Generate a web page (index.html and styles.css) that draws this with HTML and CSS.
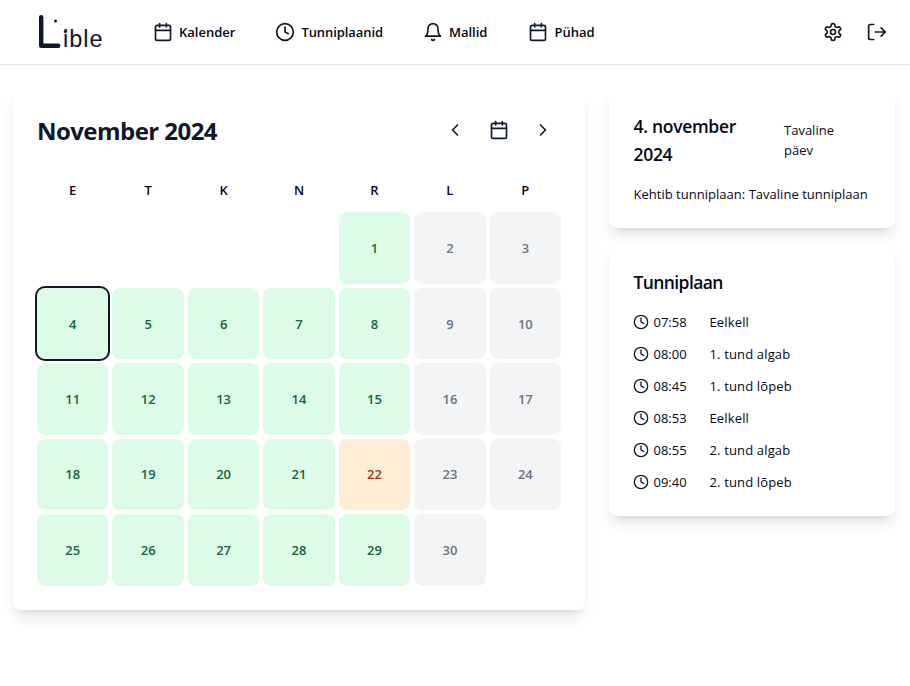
FILE: index.html
```html
<!DOCTYPE html>
<html lang="et">
<head>
<meta charset="utf-8">
<title>Kalender</title>
<link rel="stylesheet" href="styles.css">
</head>
<body>
<svg class="sprite" aria-hidden="true">
  <symbol id="calendar" viewBox="0 0 24 24"><path d="M8 2v4M16 2v4M3 10h18"/><rect width="18" height="18" x="3" y="4" rx="2"/></symbol>
  <symbol id="clock" viewBox="0 0 24 24"><circle cx="12" cy="12" r="10"/><path d="M12 6v6l4 2"/></symbol>
  <symbol id="bell" viewBox="0 0 24 24"><path d="M6 8a6 6 0 0 1 12 0c0 7 3 9 3 9H3s3-2 3-9M10.3 21a1.94 1.94 0 0 0 3.4 0"/></symbol>
  <symbol id="gear" viewBox="0 0 24 24"><path d="M12.22 2h-.44a2 2 0 0 0-2 2v.18a2 2 0 0 1-1 1.73l-.43.25a2 2 0 0 1-2 0l-.15-.08a2 2 0 0 0-2.73.73l-.22.38a2 2 0 0 0 .73 2.73l.15.1a2 2 0 0 1 1 1.72v.51a2 2 0 0 1-1 1.74l-.15.09a2 2 0 0 0-.73 2.73l.22.38a2 2 0 0 0 2.73.73l.15-.08a2 2 0 0 1 2 0l.43.25a2 2 0 0 1 1 1.73V20a2 2 0 0 0 2 2h.44a2 2 0 0 0 2-2v-.18a2 2 0 0 1 1-1.73l.43-.25a2 2 0 0 1 2 0l.15.08a2 2 0 0 0 2.73-.73l.22-.39a2 2 0 0 0-.73-2.73l-.15-.08a2 2 0 0 1-1-1.74v-.5a2 2 0 0 1 1-1.74l.15-.09a2 2 0 0 0 .73-2.73l-.22-.38a2 2 0 0 0-2.73-.73l-.15.08a2 2 0 0 1-2 0l-.43-.25a2 2 0 0 1-1-1.73V4a2 2 0 0 0-2-2z"/><circle cx="12" cy="12" r="3"/></symbol>
  <symbol id="exit" viewBox="0 0 24 24"><path d="M8 3H4a2 2 0 0 0-2 2v14a2 2 0 0 0 2 2h4M17 17l5-5-5-5M22 12H10"/></symbol>
  <symbol id="left" viewBox="0 0 24 24"><path d="m15 18-6-6 6-6"/></symbol>
  <symbol id="right" viewBox="0 0 24 24"><path d="m9 18 6-6-6-6"/></symbol>
</svg>
<header class="topbar">
  <svg class="logo" width="80" height="48" viewBox="0 0 80 48">
    <path class="logo-l" d="M11.2 9.3v28.4h17"/>
    <g class="logo-dots"><circle cx="25.5" cy="13" r="1.5"/><circle cx="35.5" cy="23.5" r="1.6"/></g>
    <g class="logo-faint"><circle cx="16.5" cy="9.7" r=".6"/><circle cx="21.5" cy="11.3" r=".6"/><circle cx="30.5" cy="16.5" r=".6"/><circle cx="34.5" cy="20.5" r=".6"/><circle cx="38.5" cy="29" r=".5"/><circle cx="39.3" cy="34.5" r=".5"/></g>
    <text class="logo-text" x="33" y="39">ible</text>
  </svg>
  <nav class="nav">
    <a class="link"><svg class="icon"><use href="#calendar"/></svg><span>Kalender</span></a>
    <a class="link wide"><svg class="icon"><use href="#clock"/></svg><span>Tunniplaanid</span></a>
    <a class="link"><svg class="icon"><use href="#bell"/></svg><span>Mallid</span></a>
    <a class="link last"><svg class="icon"><use href="#calendar"/></svg><span>Pühad</span></a>
  </nav>
  <div class="actions"><svg class="icon"><use href="#gear"/></svg><svg class="icon"><use href="#exit"/></svg></div>
</header>
<main class="content">
  <section class="card month">
    <div class="month-head">
      <h1>November 2024</h1>
      <div class="controls"><svg class="icon"><use href="#left"/></svg><svg class="icon"><use href="#calendar"/></svg><svg class="icon"><use href="#right"/></svg></div>
    </div>
    <div class="weekdays"><span>E</span><span>T</span><span>K</span><span>N</span><span>R</span><span>L</span><span>P</span></div>
    <div class="days">
      <div class="day first">1</div><div class="day off">2</div><div class="day off">3</div>
      <div class="day selected">4</div><div class="day">5</div><div class="day">6</div><div class="day">7</div><div class="day">8</div><div class="day off">9</div><div class="day off">10</div>
      <div class="day">11</div><div class="day">12</div><div class="day">13</div><div class="day">14</div><div class="day">15</div><div class="day off">16</div><div class="day off">17</div>
      <div class="day">18</div><div class="day">19</div><div class="day">20</div><div class="day">21</div><div class="day special">22</div><div class="day off">23</div><div class="day off">24</div>
      <div class="day">25</div><div class="day">26</div><div class="day">27</div><div class="day">28</div><div class="day">29</div><div class="day off">30</div>
    </div>
  </section>
  <aside class="side">
    <section class="card info">
      <div class="info-head"><h2>4. november 2024</h2><span class="kind">Tavaline päev</span></div>
      <p>Kehtib tunniplaan: Tavaline tunniplaan</p>
    </section>
    <section class="card schedule">
      <h2 class="tight">Tunniplaan</h2>
      <ul>
        <li><svg class="icon"><use href="#clock"/></svg><time>07:58</time><span>Eelkell</span></li>
        <li><svg class="icon"><use href="#clock"/></svg><time>08:00</time><span>1. tund algab</span></li>
        <li><svg class="icon"><use href="#clock"/></svg><time>08:45</time><span>1. tund lõpeb</span></li>
        <li><svg class="icon"><use href="#clock"/></svg><time>08:53</time><span>Eelkell</span></li>
        <li><svg class="icon"><use href="#clock"/></svg><time>08:55</time><span>2. tund algab</span></li>
        <li><svg class="icon"><use href="#clock"/></svg><time>09:40</time><span>2. tund lõpeb</span></li>
      </ul>
    </section>
  </aside>
</main>
</body>
</html>
```
FILE: styles.css
```css
* { box-sizing: border-box; margin: 0; padding: 0; }
body { background: #fff; color: #020817; font: 14px/20px "Open Sans", "Noto Sans", sans-serif; min-height: 686px; overflow: hidden; }
.sprite { display: none; }
.icon { display: block; flex: none; width: 20px; height: 20px; fill: none; stroke: #0f172a; stroke-width: 2; stroke-linecap: round; stroke-linejoin: round; }
.topbar { display: flex; align-items: center; height: 65px; padding: 0 23px 1px 30px; border-bottom: 1px solid #e5e7eb; box-shadow: 0 1px 2px rgba(0, 0, 0, .05); }
.logo { flex: none; }
.logo-l { fill: none; stroke: #0f172a; stroke-width: 4.4; stroke-linecap: round; stroke-linejoin: round; }
.logo-dots { fill: #0f172a; }
.logo-faint { fill: #b8bcc5; }
.logo-text { font: 23.5px "Liberation Sans", sans-serif; letter-spacing: 1px; fill: #0f172a; }
.nav { display: flex; gap: 40px; margin-left: 43px; }
.link { display: flex; align-items: center; gap: 6px; font-size: 13px; font-weight: 600; }
.wide { letter-spacing: -.08px; }
.last { margin-left: 1px; }
.actions { display: flex; gap: 24px; margin-left: auto; }
.content { display: flex; align-items: flex-start; gap: 24px; padding: 23px 15px 0 13px; }
.card { background: #fff; border-radius: 8px; padding: 24px; box-shadow: 0 10px 15px -3px rgba(0, 0, 0, .1), 0 4px 6px -4px rgba(0, 0, 0, .1); }
.month { width: 572px; height: 522px; flex: none; }
.month-head { display: flex; justify-content: space-between; align-items: center; height: 36px; }
h1 { font-size: 24px; line-height: 32px; font-weight: 700; letter-spacing: -.55px; color: #0f172a; padding-top: 2px; }
.controls { display: flex; gap: 24px; padding-right: 8px; }
.weekdays, .days { display: grid; grid-template-columns: repeat(7, 1fr); gap: 4px; text-align: center; }
.weekdays { margin-top: 32px; font-size: 13px; font-weight: 600; }
.days { margin-top: 12.4px; }
.day { display: flex; align-items: center; justify-content: center; aspect-ratio: 1; border-radius: 8px; background: #dcfce7; color: #166534; font-size: 13px; font-weight: 600; }
.first { grid-column-start: 5; }
.off { background: #f3f4f6; color: #6b7280; }
.special { background: #ffedd5; color: #9a3412; }
.selected { box-shadow: 0 0 0 2px #0f172a; }
.side { flex: 1; display: grid; gap: 16px; }
.info, .schedule { padding-left: 24.5px; }
.info { height: 140px; }
h2 { font-size: 17.5px; line-height: 28px; font-weight: 600; letter-spacing: -.3px; }
.tight { letter-spacing: -.6px; }
.info-head { display: flex; align-items: center; justify-content: space-between; }
.info-head h2 { width: 120px; }
.kind { width: 87px; font-size: 13px; padding-right: 20px; }
.info p { margin-top: 16px; white-space: nowrap; font-size: 13px; letter-spacing: .02px; }
.schedule { height: 272px; }
ul { list-style: none; display: grid; gap: 12px; margin-top: 16px; }
li { display: flex; align-items: center; font-size: 13px; margin-left: -.5px; }
li .icon { width: 16px; height: 16px; }
time { width: 56px; margin-left: 4.5px; }
li span { letter-spacing: .15px; }
```
